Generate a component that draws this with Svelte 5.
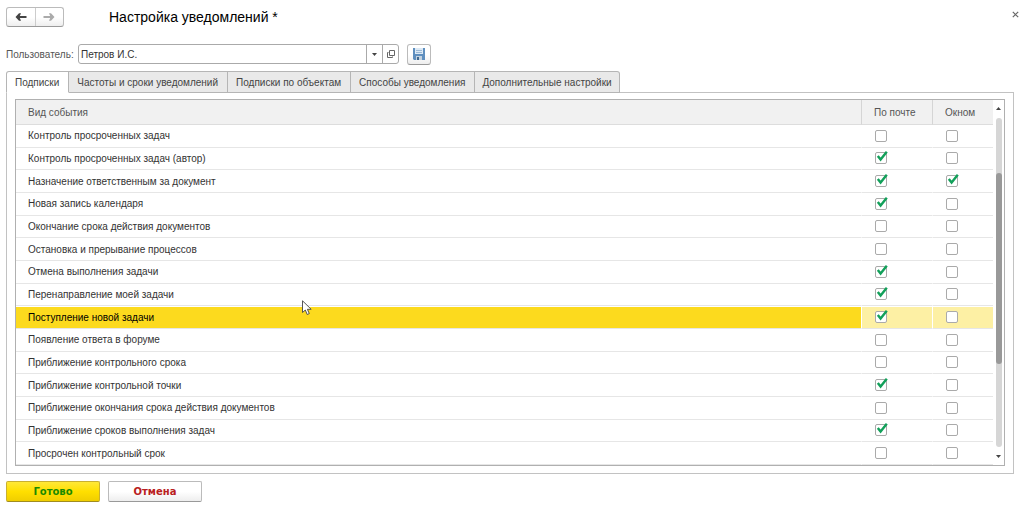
<script lang="ts">
	let tabs = [
		"Подписки",
		"Частоты и сроки уведомлений",
		"Подписки по объектам",
		"Способы уведомления",
		"Дополнительные настройки"
	];
	let activeTab = $state(0);

	let user = $state("Петров И.С.");
	let selected = $state(8);

	let events = $state([
		{ name: "Контроль просроченных задач", mail: false, popup: false },
		{ name: "Контроль просроченных задач (автор)", mail: true, popup: false },
		{ name: "Назначение ответственным за документ", mail: true, popup: true },
		{ name: "Новая запись календаря", mail: true, popup: false },
		{ name: "Окончание срока действия документов", mail: false, popup: false },
		{ name: "Остановка и прерывание процессов", mail: false, popup: false },
		{ name: "Отмена выполнения задачи", mail: true, popup: false },
		{ name: "Перенаправление моей задачи", mail: true, popup: false },
		{ name: "Поступление новой задачи", mail: true, popup: false },
		{ name: "Появление ответа в форуме", mail: false, popup: false },
		{ name: "Приближение контрольного срока", mail: false, popup: false },
		{ name: "Приближение контрольной точки", mail: true, popup: false },
		{ name: "Приближение окончания срока действия документов", mail: false, popup: false },
		{ name: "Приближение сроков выполнения задач", mail: true, popup: false },
		{ name: "Просрочен контрольный срок", mail: false, popup: false }
	]);
</script>

{#snippet box(event, key, label)}
	<label class="check">
		<input type="checkbox" bind:checked={event[key]} aria-label="{event.name}: {label}" />
		<svg viewBox="0 0 14 14" width="14" height="14" aria-hidden="true">
			<path d="M2.8 5 L5.6 8.6 L11.8 0.8" fill="none" stroke="#12a05a" stroke-width="2.4" />
		</svg>
	</label>
{/snippet}

<div class="window">
	<header>
		<div class="history">
			<button aria-label="Назад">
				<svg viewBox="0 0 12 10" width="12" height="10"><path d="M0.5 5 L4 1.2 H6 L4.8 4 H11.5 V6 H4.8 L6 8.8 H4 Z" fill="#444" /></svg>
			</button>
			<button aria-label="Вперед">
				<svg viewBox="0 0 12 10" width="12" height="10"><path d="M11.5 5 L8 1.2 H6 L7.2 4 H0.5 V6 H7.2 L6 8.8 H8 Z" fill="#aaa" /></svg>
			</button>
		</div>
		<h1>Настройка уведомлений *</h1>
		<button class="close" aria-label="Закрыть">
			<svg viewBox="0 0 7 7" width="7" height="7"><path d="M0.8 0.8 L6.2 6.2 M6.2 0.8 L0.8 6.2" stroke="#666" stroke-width="1.2" /></svg>
		</button>
	</header>

	<div class="user-row">
		<label for="user">Пользователь:</label>
		<div class="field">
			<input id="user" type="text" bind:value={user} />
			<button aria-label="Выбрать">
				<svg viewBox="0 0 5 3" width="5" height="3"><path d="M0 0 H5 L2.5 3 Z" fill="#444" /></svg>
			</button>
			<button aria-label="Открыть">
				<svg viewBox="0 0 8 8" width="8" height="8"><path d="M2.5 0.5 H7.5 V5.5 H2.5 Z M1.5 2.5 H0.5 V7.5 H5.5 V6.5" fill="none" stroke="#666" /></svg>
			</button>
		</div>
		<button class="save" aria-label="Сохранить">
			<svg viewBox="0 0 12 12" width="12" height="12">
				<path d="M0 0 H12 V12 H1 L0 11 Z" fill="#5f8fbf" />
				<path d="M2 0 H10 V6 H2 Z" fill="#dce9f5" />
				<path d="M3 2.5 H9 M3 4.5 H9" stroke="#9bb9d6" />
				<path d="M3 8 H9 V12 H3 Z" fill="#c3d2df" />
				<path d="M4 9 H6 V12 H4 Z" fill="#3f6890" />
			</svg>
		</button>
	</div>

	<div class="tabs" role="tablist">
		{#each tabs as tab, i}
			<button role="tab" class:active={activeTab == i} aria-selected={activeTab == i} onclick={() => (activeTab = i)}>{tab}</button>
		{/each}
	</div>

	<div class="panel">
		<div class="list">
			<table>
				<thead>
					<tr>
						<th>Вид события</th>
						<th class="mail">По почте</th>
						<th class="popup">Окном</th>
					</tr>
				</thead>
				<tbody>
					{#each events as event, i}
						<tr class:selected={selected == i} onclick={() => (selected = i)}>
							<td>{event.name}</td>
							<td>{@render box(event, "mail", "По почте")}</td>
							<td>{@render box(event, "popup", "Окном")}</td>
						</tr>
					{/each}
				</tbody>
			</table>
			<div class="scroll">
				<svg viewBox="0 0 5 3" width="5" height="3"><path d="M0 3 H5 L2.5 0 Z" fill="#444" /></svg>
				<div class="track"><div class="thumb"></div></div>
				<svg viewBox="0 0 5 3" width="5" height="3"><path d="M0 0 H5 L2.5 3 Z" fill="#444" /></svg>
			</div>
		</div>
	</div>

	<footer>
		<button class="done">Готово</button>
		<button class="cancel">Отмена</button>
	</footer>

	<svg class="cursor" viewBox="0 0 10 16" width="10" height="16" aria-hidden="true">
		<path d="M0.5 0.8 V12.5 L3.3 10 L5.2 14.5 L7.3 13.6 L5.4 9.3 H9.2 Z" fill="#fff" stroke="#444" stroke-width="0.9" />
	</svg>
</div>

<style>
	:global(body) {
		margin: 0;
		background: #fff;
	}

	.window {
		position: relative;
		padding: 7px 10px 6px 6px;
		font-family: "Liberation Sans", Arial, sans-serif;
		font-size: 10px;
		color: #444;
	}

	button, input {
		font: inherit;
		color: inherit;
		margin: 0;
		padding: 0;
		box-sizing: border-box;
	}

	svg {
		display: block;
	}

	header {
		display: flex;
		align-items: center;
		height: 20px;
	}

	.history {
		display: flex;
		box-sizing: border-box;
		width: 58px;
		height: 20px;
		border: 1px solid #bbb;
		border-bottom-color: #999;
		border-radius: 3px;
		background: linear-gradient(#fff 50%, #eee);
	}

	.history button {
		flex: 1;
		display: flex;
		align-items: center;
		justify-content: center;
		border: 0;
		background: none;
	}

	.history button + button {
		border-left: 1px solid #ccc;
	}

	h1 {
		flex: 1;
		margin: 0 0 0 45px;
		font-size: 14px;
		font-weight: normal;
		color: #000;
	}

	.close {
		align-self: flex-start;
		border: 0;
		padding: 4px 0;
		background: none;
		margin-right: -5px;
	}

	.user-row {
		display: flex;
		align-items: center;
		height: 22px;
		margin-top: 16px;
	}

	.user-row label {
		width: 72px;
		white-space: nowrap;
		color: #555;
	}

	.field {
		display: flex;
		box-sizing: border-box;
		width: 321px;
		height: 20px;
		border: 1px solid #aaa;
		border-radius: 3px;
	}

	.field input {
		flex: 1;
		min-width: 0;
		border: 0;
		padding: 0 2px;
		background: none;
		outline: none;
		color: #333;
	}

	.field button {
		display: flex;
		align-items: center;
		justify-content: center;
		width: 16px;
		border: 0;
		border-left: 1px solid #aaa;
		background: none;
	}

	.save {
		display: flex;
		align-items: center;
		justify-content: center;
		width: 24px;
		height: 21px;
		margin-left: 8px;
		border: 1px solid #bbb;
		border-bottom-color: #999;
		border-radius: 3px;
		background: linear-gradient(#fff 50%, #eee);
	}

	.tabs {
		display: flex;
		margin-top: 6px;
	}

	.tabs button {
		height: 22px;
		padding: 0 9px 0 8px;
		border: 1px solid #b5b5b5;
		border-left-width: 0;
		background: #e9e9e9;
		white-space: nowrap;
	}

	.tabs button:first-child {
		border-left-width: 1px;
		border-radius: 3px 0 0 0;
	}

	.tabs button:last-child {
		padding: 0 7px;
		border-radius: 0 3px 0 0;
	}

	.tabs button.active {
		position: relative;
		background: #fff;
		border-bottom-color: #fff;
	}

	.panel {
		margin-top: -1px;
		padding: 6px 8px 7px;
		border: 1px solid #c2c2c2;
	}

	.list {
		display: flex;
		border: 1px solid #b0b0b0;
	}

	table {
		flex: 1;
		height: 365px;
		border-collapse: separate;
		border-spacing: 0;
		table-layout: fixed;
	}

	th {
		height: 25px;
		box-sizing: border-box;
		padding: 0 12px;
		border-bottom: 1px solid #ddd;
		background: #f1f1f1;
		font-weight: normal;
		text-align: left;
		color: #555;
	}

	th + th {
		border-left: 1px solid #d5d5d5;
	}

	.mail {
		width: 71px;
	}

	.popup {
		width: 61px;
	}

	td {
		box-sizing: border-box;
		padding: 0 12px;
		border-bottom: 1px solid #e6e6e6;
		color: #333;
	}

	td + td {
		padding-left: 13px;
		border-left: 1px solid transparent;
	}

	.selected td {
		background: #fcda1e;
		background-clip: padding-box;
		box-shadow: inset 0 1px #fff;
		color: #000;
	}

	.selected td + td {
		background: #fdf0a4;
		background-clip: padding-box;
	}

	.check {
		display: grid;
		width: 14px;
		height: 14px;
	}

	.check input {
		grid-area: 1 / 1;
		appearance: none;
		align-self: center;
		width: 12px;
		height: 12px;
		border: 1px solid #aaa;
		border-radius: 2px;
		background: #fff;
	}

	.check svg {
		grid-area: 1 / 1;
		visibility: hidden;
		pointer-events: none;
	}

	.check input:checked + svg {
		visibility: visible;
	}

	.scroll {
		display: flex;
		flex-direction: column;
		align-items: center;
		gap: 8px;
		width: 11px;
		padding: 7px 0;
		box-sizing: border-box;
	}

	.track {
		flex: 1;
		width: 6px;
		border-radius: 3px;
		background: #d6d6d6;
	}

	.thumb {
		height: 58%;
		margin-top: 55px;
		border-radius: 3px;
		background: #999;
	}

	footer {
		display: flex;
		gap: 8px;
		margin-top: 7px;
	}

	footer button {
		width: 94px;
		height: 21px;
		border: 1px solid #bbb;
		border-bottom-color: #999;
		border-radius: 2px;
		font-family: "DejaVu Sans", Verdana, sans-serif;
		font-size: 10px;
		font-weight: bold;
	}

	.done {
		background: linear-gradient(#ffe838, #ffdf00 50%, #f0ce00);
		border-color: #c9b030;
		border-bottom-color: #a08c20;
		color: #1a8a00;
	}

	.cancel {
		background: linear-gradient(#fff 50%, #eee);
		color: #b92020;
	}

	/* mouse pointer over the list */
	.cursor {
		position: absolute;
		left: 302px;
		top: 300px;
	}
</style>
